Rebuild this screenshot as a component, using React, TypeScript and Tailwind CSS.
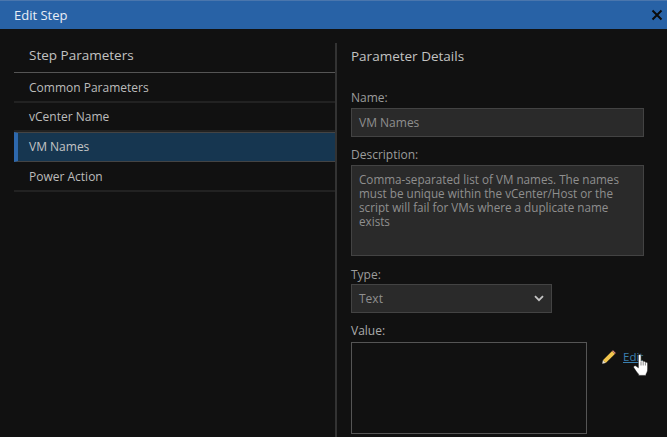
const rows = ['Common Parameters', 'vCenter Name', 'VM Names', 'Power Action']

function Pencil() {
  return (
    <svg width="14" height="14" viewBox="0 0 14 14" className="shrink-0">
      <path d="M0.9 10.3 L10.1 1.1 L12.9 3.9 L3.7 13.1 Z" fill="#f2c64e" />
      <path d="M10.1 1.1 L11 0.2 L13.8 3 L12.9 3.9 Z" fill="#e0897c" />
      <path d="M0.9 10.3 L3.7 13.1 L0.2 13.8 Z" fill="#e8e0d0" />
    </svg>
  )
}

function HandCursor() {
  return (
    <svg width="15" height="24" viewBox="0 0 15 24" className="absolute left-[633px] top-[352px]">
      <path
        d="M5.4 3.5 C5.4 2.2 8 2.2 8 3.5 L8 9 C8.6 8.3 10 8.5 10.2 9.5 C10.8 8.9 12.2 9.1 12.4 10.3 C13 9.9 14.6 10.3 14.6 11.5 L14.6 17 C14.6 19.5 13.8 21 13 22 L13 23.4 L5.6 23.4 L5.6 22.2 C3.6 20.5 2.4 17.8 0.8 15.8 C0 14.4 1.6 13 3 14 L5.4 15.8 Z"
        fill="#ffffff"
        stroke="#111111"
        strokeWidth="0.5"
      />
      <path d="M8 9.5 V13.5 M10.2 10 V13.5 M12.4 10.5 V13.5" stroke="#555555" strokeWidth="0.7" />
    </svg>
  )
}

export default function App() {
  return (
    <div className="relative flex h-[437px] w-[667px] flex-col overflow-hidden bg-[#111111] font-['Open_Sans',sans-serif] text-[12px] text-[#b4b4b4]">
      {/* Title bar */}
      <div className="flex h-[29px] shrink-0 items-center justify-between border-t border-[#4a76ad] bg-[#2862a6] pl-[14px] pr-[3px]">
        <span className="text-[13px] leading-none text-[#e8eef6]">Edit Step</span>
        <svg width="12" height="12" viewBox="0 0 12 12" className="mr-[1px]">
          <path d="M1.5 1.5 L10.5 10.5 M10.5 1.5 L1.5 10.5" stroke="#0c0c0c" strokeWidth="2" />
        </svg>
      </div>

      <div className="flex min-h-0 flex-1 pl-[14px] pt-[14px]">
        {/* Step list */}
        <div className="h-full w-[323px] shrink-0 border-r-2 border-[#333333]">
          <div className="flex h-[30px] items-center border-b border-[#555555] pb-[4px] pl-[15px] text-[13.5px] text-[#c2c2c2]">
            Step Parameters
          </div>
          {rows.map((row) => (
            <div
              key={row}
              className={
                row === 'VM Names'
                  ? 'flex h-[30px] items-center border-y border-[#444444] border-l-[4px] border-l-[#2d68ad] bg-[#163650] pl-[11px] text-[#c4c4c4]'
                  : 'flex h-[29.5px] items-center border-b-2 border-[#222222] pl-[15px] pt-[2px] text-[#bcbcbc]'
              }
            >
              {row}
            </div>
          ))}
        </div>

        {/* Parameter details */}
        <div className="flex flex-1 flex-col pl-[14px]">
          <div className="flex h-[30px] items-center pb-[4px] text-[13.5px] text-[#c2c2c2]">Parameter Details</div>

          <label className="mt-[16px] h-[19px] leading-[17px] text-[#9c9c9c]">Name:</label>
          <div className="flex h-[29px] w-[293px] items-center border border-[#434343] bg-[#2a2a2a] pl-[7px] pt-[1px] text-[#8f8f8f]">
            VM Names
          </div>

          <label className="mt-[8px] h-[20px] leading-[20px] text-[#9c9c9c]">Description:</label>
          <div className="h-[91px] w-[293px] border border-[#434343] bg-[#2a2a2a] px-[7px] pt-[6px] text-[11.7px] leading-[14px] text-[#8f8f8f]">
            Comma-separated list of VM names. The names must be unique within the vCenter/Host or the script will fail for VMs where a duplicate name exists
          </div>

          <label className="mt-[9px] h-[19px] leading-[19px] text-[#9c9c9c]">Type:</label>
          <div className="flex h-[29px] w-[201px] items-center justify-between border border-[#434343] bg-[#2a2a2a] px-[7px] text-[#8f8f8f]">
            Text
            <svg width="10" height="7" viewBox="0 0 10 7">
              <path d="M1 1.2 L5 5.2 L9 1.2" fill="none" stroke="#c4c4c4" strokeWidth="1.8" />
            </svg>
          </div>

          <label className="mt-[9px] h-[20px] font-medium leading-[18px] text-[#ababab]">Value:</label>
          <div className="flex items-start">
            <div className="h-[92px] w-[236px] border border-[#555555] bg-[#111111]" />
            <div className="ml-[15px] mt-[6px] flex items-center gap-[7px]">
              <Pencil />
              <a className="text-[11.5px] text-[#3a7fb0] underline">Edit</a>
            </div>
          </div>
        </div>
      </div>

      <HandCursor />
    </div>
  )
}
